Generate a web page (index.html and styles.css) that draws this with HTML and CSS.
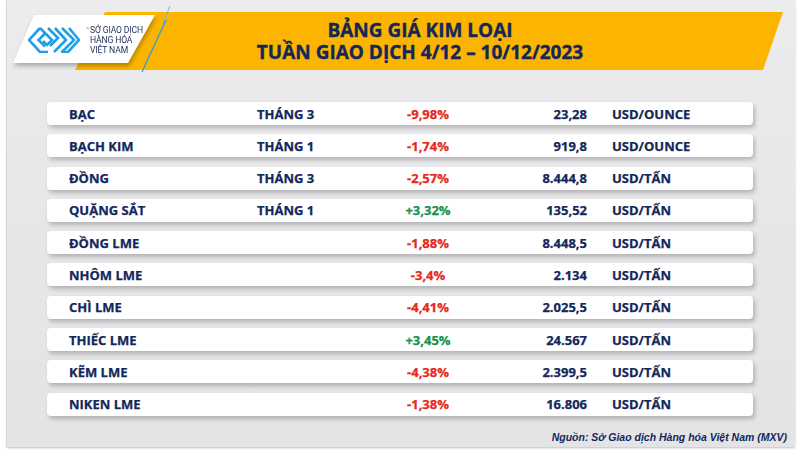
FILE: index.html
```html
<!DOCTYPE html>
<html lang="vi">
<head>
<meta charset="utf-8">
<title>Bảng giá kim loại</title>
<link rel="stylesheet" href="styles.css">
</head>
<body>
<div class="frame">
  <header class="header">
    <div class="band">
      <h1 class="title"><span class="tline">BẢNG GIÁ KIM LOẠI</span><span class="tline">TUẦN GIAO DỊCH 4/12 – 10/12/2023</span></h1>
    </div>
    <div class="logo-wrap">
      <div class="logo">
        <svg class="logo-mark" viewBox="0 0 52 26" width="52" height="26" aria-hidden="true">
          <g fill="none" stroke="#1e9fe6" stroke-width="2.6" stroke-linejoin="miter">
            <polyline points="12,1 1,13 12,25 20,25"/>
            <polyline points="17,6.5 10.5,13 17,19.5"/>
            <polyline points="12,1 24,13 19,18 15,14"/>
            <polyline points="20,1 30,11 22,19"/>
            <polyline points="27,1 38,13 26,25"/>
            <polyline points="34,1 46,13 34,25"/>
            <polyline points="41,1 51,13 40,25 33,25"/>
          </g>
        </svg>
        <span class="tm">™</span>
        <div class="logo-text">SỞ GIAO DỊCH<br>HÀNG HÓA<br>VIỆT NAM</div>
      </div>
    </div>
    <svg class="accent" width="40" height="70" viewBox="0 0 40 70" aria-hidden="true">
      <line x1="31" y1="0" x2="24" y2="18" stroke="#6fb6e6" stroke-width="1"/>
      <line x1="27" y1="14" x2="3" y2="66" stroke="#2f9be0" stroke-width="1.3"/>
    </svg>
  </header>

  <main class="rows">
    <div class="row"><span class="name">BẠC</span><span class="month">THÁNG 3</span><span class="chg neg">-9,98%</span><span class="price">23,28</span><span class="unit">USD/OUNCE</span></div>
    <div class="row"><span class="name">BẠCH KIM</span><span class="month">THÁNG 1</span><span class="chg neg">-1,74%</span><span class="price">919,8</span><span class="unit">USD/OUNCE</span></div>
    <div class="row"><span class="name">ĐỒNG</span><span class="month">THÁNG 3</span><span class="chg neg">-2,57%</span><span class="price">8.444,8</span><span class="unit">USD/TẤN</span></div>
    <div class="row"><span class="name">QUẶNG SẮT</span><span class="month">THÁNG 1</span><span class="chg pos">+3,32%</span><span class="price">135,52</span><span class="unit">USD/TẤN</span></div>
    <div class="row"><span class="name">ĐỒNG LME</span><span class="month"></span><span class="chg neg">-1,88%</span><span class="price">8.448,5</span><span class="unit">USD/TẤN</span></div>
    <div class="row"><span class="name">NHÔM LME</span><span class="month"></span><span class="chg neg">-3,4%</span><span class="price">2.134</span><span class="unit">USD/TẤN</span></div>
    <div class="row"><span class="name">CHÌ LME</span><span class="month"></span><span class="chg neg">-4,41%</span><span class="price">2.025,5</span><span class="unit">USD/TẤN</span></div>
    <div class="row"><span class="name">THIẾC LME</span><span class="month"></span><span class="chg pos">+3,45%</span><span class="price">24.567</span><span class="unit">USD/TẤN</span></div>
    <div class="row"><span class="name">KẼM LME</span><span class="month"></span><span class="chg neg">-4,38%</span><span class="price">2.399,5</span><span class="unit">USD/TẤN</span></div>
    <div class="row"><span class="name">NIKEN LME</span><span class="month"></span><span class="chg neg">-1,38%</span><span class="price">16.806</span><span class="unit">USD/TẤN</span></div>
  </main>

  <footer class="source">Nguồn: Sở Giao dịch Hàng hóa Việt Nam (MXV)</footer>
</div>
</body>
</html>
```

FILE: styles.css
```css
* { box-sizing: border-box; }

html, body {
  margin: 0;
  padding: 0;
  background: #ffffff;
}

body {
  width: 800px;
  height: 450px;
  overflow: hidden;
  font-family: "Open Sans", "Noto Sans", "DejaVu Sans", sans-serif;
}

.frame {
  margin-left: 7px;
  width: 788px;
  height: 447px;
  background: linear-gradient(180deg, #ececee 0%, #e6e6e8 60%, #e4e4e6 100%);
  box-shadow: 0 1px 2px rgba(0, 0, 0, 0.25), -1px 0 1px rgba(0, 0, 0, 0.08);
  display: flex;
  flex-direction: column;
}

/* ---------- header ---------- */
.header {
  position: relative;
  height: 100px;
  padding-top: 12px;
}

.band {
  margin-left: 68px;
  width: 708px;
  height: 58px;
  background: #fbb500;
  clip-path: polygon(30px 0, 100% 0, calc(100% - 20px) 100%, 0 100%);
  display: flex;
  align-items: center;
  justify-content: center;
  padding-right: 18px;
}

.title {
  margin: 0;
  font-size: 19px;
  font-weight: 700;
  color: #13275a;
  text-align: center;
  display: flex;
  flex-direction: column;
  align-items: center;
  -webkit-text-stroke: 0.35px #13275a;
}

.tline {
  display: block;
  line-height: 22px;
  height: 22px;
}

.logo-wrap {
  position: absolute;
  left: 6px;
  top: 15px;
  filter: drop-shadow(1px 3px 2px rgba(0, 0, 0, 0.28));
}

.logo {
  position: relative;
  width: 142px;
  height: 48px;
  background: #ffffff;
  clip-path: polygon(21px 0, 142px 0, 115px 48px, 0 48px);
  display: flex;
  align-items: center;
  padding-left: 15px;
}

.logo-mark {
  display: block;
  flex: none;
  margin-top: 2px;
}

.tm {
  position: absolute;
  left: 72px;
  top: 11px;
  font-size: 4px;
  color: #6a7a99;
  font-family: "Liberation Sans", sans-serif;
}

.logo-text {
  margin-left: 10px;
  font-family: Roboto, "Liberation Sans", sans-serif;
  font-size: 8.6px;
  line-height: 10px;
  color: #1f2c58;
  letter-spacing: -0.15px;
  margin-top: 2px;
}

.accent {
  position: absolute;
  left: 132px;
  top: 6px;
}

/* ---------- rows ---------- */
.rows {
  margin-left: 40px;
  width: 706px;
  display: flex;
  flex-direction: column;
  gap: 9.3px;
  margin-top: 2px;
}

.row {
  height: 23px;
  background: #ffffff;
  border-radius: 4px;
  box-shadow: 2px 3px 4px rgba(0, 0, 0, 0.22);
  display: grid;
  grid-template-columns: 188px 130px 82px 118px 1fr;
  align-items: center;
  padding-left: 22px;
  font-size: 13px;
  font-weight: 700;
  color: #13275a;
  white-space: nowrap;
  -webkit-text-stroke: 0.25px currentColor;
}

.chg { text-align: center; }
.neg { color: #e8261c; }
.pos { color: #14944a; }
.price { text-align: right; }
.unit { padding-left: 25px; }

/* ---------- footer ---------- */
.source {
  margin-top: auto;
  padding: 0 8px 4px 0;
  text-align: right;
  font-family: "Liberation Sans", Arial, sans-serif;
  font-style: italic;
  font-weight: 700;
  font-size: 10.5px;
  color: #13275a;
}
```
